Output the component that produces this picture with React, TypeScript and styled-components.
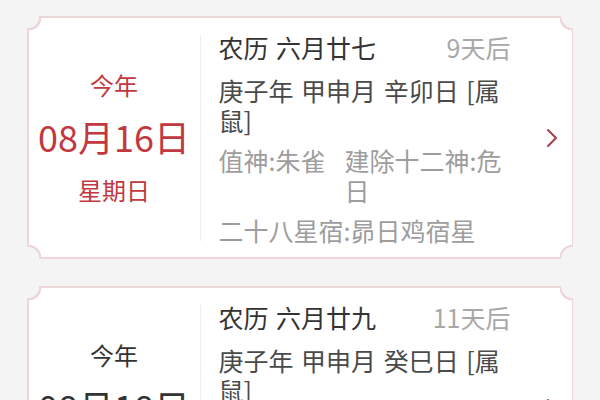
import React from 'react';
import styled, { createGlobalStyle } from 'styled-components';

const days = [
  {
    active: true,
    date: '08月16日',
    week: '星期日',
    lunar: '农历 六月廿七',
    after: '9天后',
    ganzhi: '庚子年 甲申月 辛卯日 [属鼠]',
    god: '值神:朱雀',
    twelve: '建除十二神:危日',
    star: '二十八星宿:昴日鸡宿星',
  },
  {
    active: false,
    date: '08月18日',
    week: '星期二',
    lunar: '农历 六月廿九',
    after: '11天后',
    ganzhi: '庚子年 甲申月 癸巳日 [属鼠]',
    god: '值神:金匮',
    twelve: '建除十二神:成日',
    star: '二十八星宿:参水猿宿星',
  },
];

const BORDER = '#ecd6d8';

// four concave corner cuts, one gradient per quadrant
const notched = (r: number, color: string) => `
  radial-gradient(circle at top left, transparent ${r}px, ${color} ${r + 0.6}px) top left / 51% 51% no-repeat,
  radial-gradient(circle at top right, transparent ${r}px, ${color} ${r + 0.6}px) top right / 51% 51% no-repeat,
  radial-gradient(circle at bottom left, transparent ${r}px, ${color} ${r + 0.6}px) bottom left / 51% 51% no-repeat,
  radial-gradient(circle at bottom right, transparent ${r}px, ${color} ${r + 0.6}px) bottom right / 51% 51% no-repeat
`;

const Chevron = () => (
  <svg width="12" height="20" viewBox="0 0 12 20">
    <path d="M2 2 L10 10 L2 18" fill="none" stroke="#a3404b" strokeWidth="2" strokeLinecap="round" strokeLinejoin="round" />
  </svg>
);

const App = () => {
  return (
    <>
      <GlobalStyle />
      <List>
        {days.map((d) => (
          <Card key={d.date}>
            <CardInner>
              <DateCol>
                <Year active={d.active}>今年</Year>
                <BigDate active={d.active}>{d.date}</BigDate>
                <Week active={d.active}>{d.week}</Week>
              </DateCol>
              <Info>
                <Header>
                  <Lunar>{d.lunar}</Lunar>
                  <After>{d.after}</After>
                </Header>
                <GanZhi>{d.ganzhi}</GanZhi>
                <Details>
                  <Detail>{d.god}</Detail>
                  <Detail>{d.twelve}</Detail>
                </Details>
                <Detail>{d.star}</Detail>
              </Info>
              <Arrow>
                <Chevron />
              </Arrow>
            </CardInner>
          </Card>
        ))}
      </List>
    </>
  );
};

const GlobalStyle = createGlobalStyle`
  html, body {
    margin: 0;
    height: 400px;
    overflow: hidden;
    background: #f4f4f4;
  }
  body {
    font-family: "Noto Sans CJK SC", "Noto Sans", sans-serif;
  }
`;

const List = styled.div`
  display: flex;
  flex-direction: column;
  gap: 27px;
  padding: 16px 27px;
`;

const Card = styled.div`
  padding: 1.5px;
  background: ${notched(12, BORDER)};
`;

const CardInner = styled.div`
  display: grid;
  grid-template-columns: 172px 310px 1fr;
  height: 240px;
  background: ${notched(12, '#ffffff')};
`;

const DateCol = styled.div`
  display: flex;
  flex-direction: column;
  align-items: center;
  justify-content: center;
  margin: 17px 0;
  border-right: 1px solid #eeeeee;
`;

const Year = styled.div<{ active: boolean }>`
  font-size: 24px;
  line-height: 30px;
  color: ${(p) => (p.active ? '#c2383f' : '#333333')};
`;

const BigDate = styled.div<{ active: boolean }>`
  font-size: 36px;
  line-height: 44px;
  margin: 14px 0 17px;
  color: ${(p) => (p.active ? '#c2383f' : '#333333')};
`;

const Week = styled(Year)``;

const Info = styled.div`
  display: flex;
  flex-direction: column;
  gap: 10px;
  padding: 14px 0 0 18px;
  font-size: 25px;
  line-height: 30px;
  word-spacing: 2px;
  word-break: break-all;
  line-break: anywhere;
`;

const Header = styled.div`
  display: flex;
  justify-content: space-between;
  margin-bottom: 3px;
`;

const Lunar = styled.div`
  color: #333333;
`;

const After = styled.div`
  color: #a8a8a8;
`;

const GanZhi = styled.div`
  color: #4a4a4a;
`;

const Details = styled.div`
  display: grid;
  grid-template-columns: 126px 1fr;
`;

const Detail = styled.div`
  color: #9d9d9d;
`;

const Arrow = styled.div`
  display: flex;
  align-items: center;
  justify-content: flex-end;
  padding-right: 14px;
`;

export default App;
